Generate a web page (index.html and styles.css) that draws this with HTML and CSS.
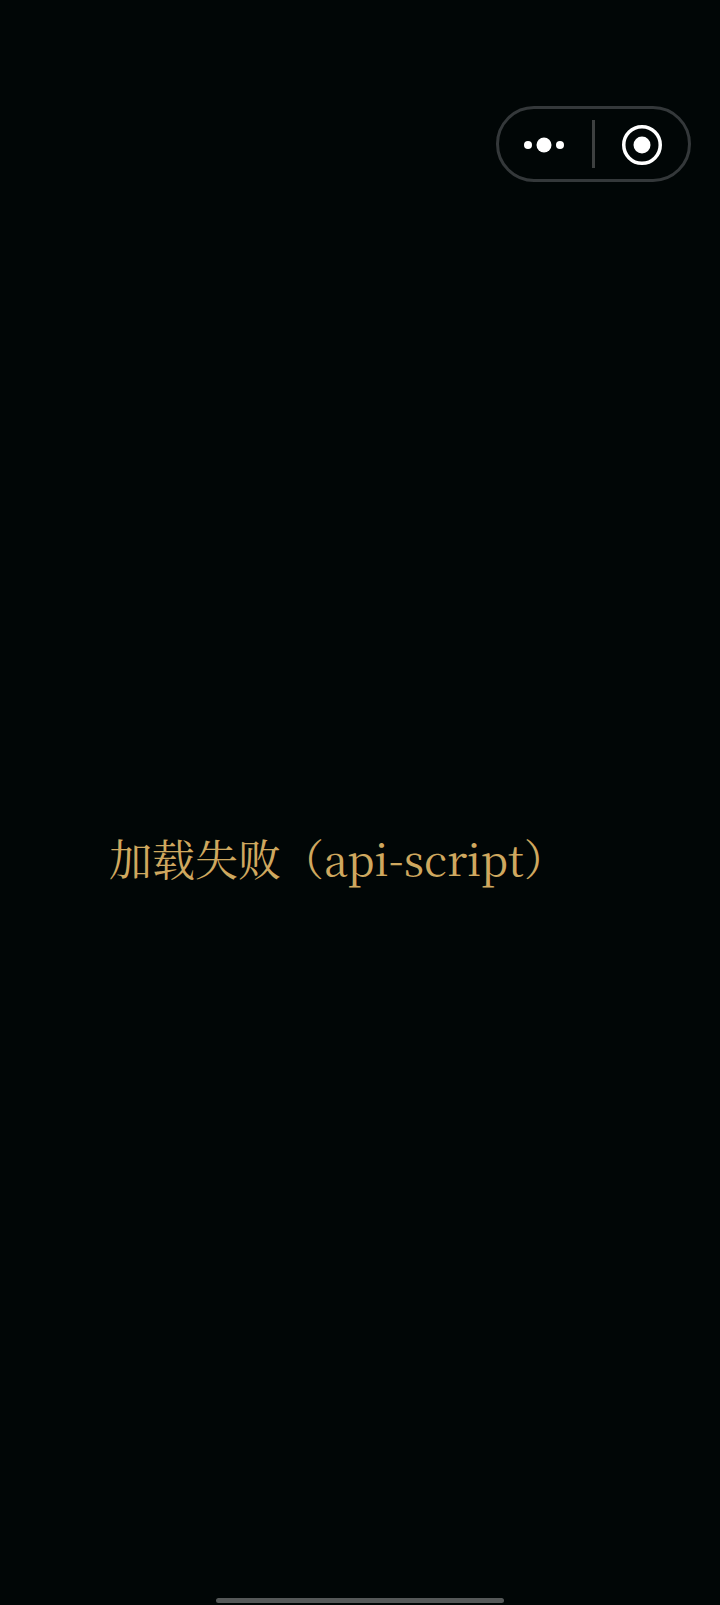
FILE: index.html
```html
<!DOCTYPE html>
<html lang="zh-CN">
<head>
    <meta charset="UTF-8">
    <meta name="viewport" content="width=device-width, initial-scale=1.0">
    <title>加载失败</title>
    <link rel="stylesheet" href="styles.css">
</head>
<body>
    <div class="page">
        <!-- Mini program capsule -->
        <div class="capsule">
            <div class="capsule-btn">
                <svg class="icon-more" width="60" height="16" viewBox="0 0 60 16">
                    <circle cx="14" cy="8" r="4" fill="#fff"/>
                    <circle cx="30" cy="8" r="7.5" fill="#fff"/>
                    <circle cx="46" cy="8" r="4" fill="#fff"/>
                </svg>
            </div>
            <div class="capsule-line"></div>
            <div class="capsule-btn">
                <svg class="icon-close" width="44" height="44" viewBox="0 0 44 44">
                    <circle cx="22" cy="22" r="18.25" fill="none" stroke="#fff" stroke-width="3.5"/>
                    <circle cx="22" cy="22" r="8.5" fill="#fff"/>
                </svg>
            </div>
        </div>

        <p class="message">加载失败（api-script）</p>

        <div class="home-bar"></div>
    </div>
</body>
</html>
```

FILE: styles.css
```css
html, body {
    margin: 0;
    height: 100%;
    overflow: hidden;
}

body {
    background: #010606;
    font-family: "Noto Serif CJK SC", "Liberation Serif", "Noto Sans CJK SC", serif;
}

.page {
    display: flex;
    flex-direction: column;
    height: 100vh;
}

.capsule {
    display: flex;
    align-items: center;
    align-self: flex-end;
    box-sizing: border-box;
    width: 195px;
    height: 76px;
    margin: 106px 29px 0 0;
    border: 3px solid #34383a;
    border-radius: 38px;
}

.capsule-btn {
    flex: 1;
    display: flex;
    justify-content: center;
    align-items: center;
    padding-top: 1px;
}

.icon-more {
    margin-right: 4px;
}

.capsule-line {
    width: 3px;
    height: 48px;
    background: #3d4040;
}

.message {
    margin: 646px 0 0 109px;
    font-size: 43px;
    line-height: 60px;
    color: #cfa85f;
}

.home-bar {
    width: 288px;
    height: 5px;
    margin: auto auto 2px;
    border-radius: 3px;
    background: #555858;
}
```
